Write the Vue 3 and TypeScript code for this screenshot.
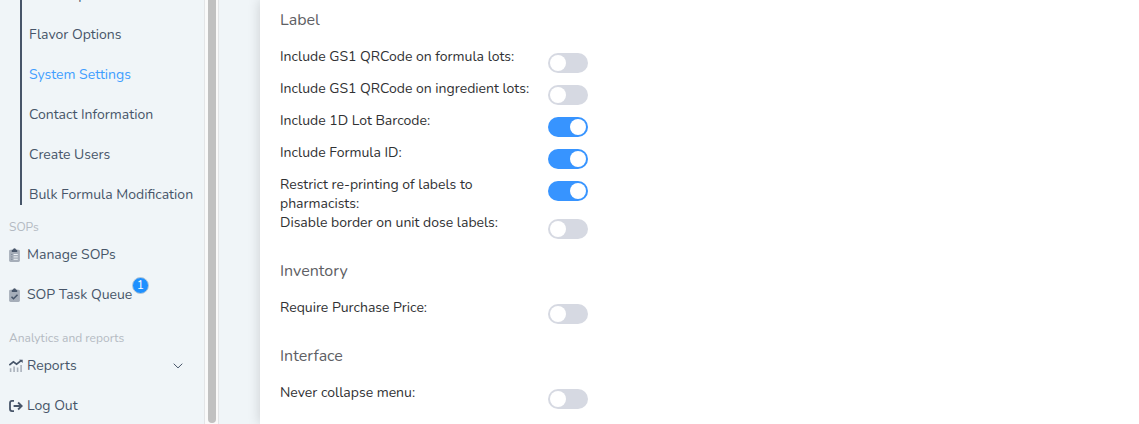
<script setup lang="ts">
interface Setting { lines: string[]; on: boolean }
interface Section { title: string; settings: Setting[] }

const subItems: { text: string; active?: boolean }[] = [
  { text: 'Label Options' },
  { text: 'Flavor Options' },
  { text: 'System Settings', active: true },
  { text: 'Contact Information' },
  { text: 'Create Users' },
  { text: 'Bulk Formula Modification' },
]

const sections: Section[] = [
  {
    title: 'Label',
    settings: [
      { lines: ['Include GS1 QRCode on formula lots:'], on: false },
      { lines: ['Include GS1 QRCode on ingredient lots:'], on: false },
      { lines: ['Include 1D Lot Barcode:'], on: true },
      { lines: ['Include Formula ID:'], on: true },
      { lines: ['Restrict re-printing of labels to', 'pharmacists:'], on: true },
      { lines: ['Disable border on unit dose labels:'], on: false },
    ],
  },
  { title: 'Inventory', settings: [{ lines: ['Require Purchase Price:'], on: false }] },
  { title: 'Interface', settings: [{ lines: ['Never collapse menu:'], on: false }] },
]
</script>

<template>
  <div class="page">
    <nav class="sidebar">
      <ul class="submenu">
        <li v-for="item in subItems" :key="item.text" :class="{ active: item.active }">{{ item.text }}</li>
      </ul>
      <div class="group first">SOPs</div>
      <div class="item">
        <svg class="icon" width="14" height="14" viewBox="0 0 14 14">
          <rect x="0.1" y="1.7" width="10.8" height="12.2" rx="1.4" fill="#a6aeb9" />
          <path d="M2.8 3.9V1.8H4a1.5 1.5 0 0 1 3 0h1.2v2.1z" fill="#475569" />
          <path d="M4.6 6.5h4.2M4.6 8.9h4.2M4.6 11.3h4.2" stroke="#edf2f6" stroke-width="1" />
          <path d="M2.2 6.5h1.2M2.2 8.9h1.2M2.2 11.3h1.2" stroke="#7c8797" stroke-width="1" />
        </svg>
        <span>Manage SOPs</span>
      </div>
      <div class="item">
        <svg class="icon" width="14" height="14" viewBox="0 0 14 14">
          <rect x="0.1" y="1.7" width="10.8" height="12.2" rx="1.4" fill="#a6aeb9" />
          <path d="M2.8 3.9V1.8H4a1.5 1.5 0 0 1 3 0h1.2v2.1z" fill="#475569" />
          <path d="M2.5 8.8l2 2 4-4" fill="none" stroke="#475569" stroke-width="1.5" />
        </svg>
        <span>SOP Task Queue</span>
        <b class="badge">1</b>
      </div>
      <div class="group second">Analytics and reports</div>
      <div class="item">
        <svg class="icon" width="14" height="14" viewBox="0 0 14 14">
          <path d="M1.6 9.2V13M5.1 7.5V13M8.6 8.5V13M12.1 6V13" stroke="#aab2bc" stroke-width="1.6" />
          <path d="M0.3 6.2L4.4 2.8l3.2 2.4 4.8-3.8" fill="none" stroke="#475569" stroke-width="1.7" />
          <path d="M10 0.8h3.7v3.2z" fill="#475569" />
        </svg>
        <span>Reports</span>
        <svg class="chevron" width="10" height="6" viewBox="0 0 10 6">
          <path d="M0.7 0.7L5 4.9l4.3-4.2" fill="none" stroke="#475569" stroke-width="1" />
        </svg>
      </div>
      <div class="item">
        <svg class="icon" width="14" height="14" viewBox="0 0 14 14">
          <path
            d="M5 1.9H3Q1 1.9 1 3.9v6.2q0 2 2 2h2M4.6 7h7.7M9.1 3.5L12.7 7l-3.6 3.5"
            fill="none" stroke="#475569" stroke-width="1.8"
          />
        </svg>
        <span>Log Out</span>
      </div>
    </nav>
    <div class="track"><div class="thumb"></div></div>
    <div class="gutter"></div>
    <main class="content">
      <section v-for="section in sections" :key="section.title">
        <h2>{{ section.title }}</h2>
        <div v-for="setting in section.settings" :key="setting.lines[0]" class="row">
          <div class="caption">
            <div v-for="line in setting.lines" :key="line">{{ line }}</div>
          </div>
          <div class="switch" :class="{ on: setting.on }"><i></i></div>
        </div>
      </section>
    </main>
  </div>
</template>

<style>
body {
  margin: 0;
  overflow: hidden;
}
</style>

<style scoped>
.page {
  display: flex;
  height: 424px;
  overflow: hidden;
  background: #f0f5f8;
  color: #475569;
  font: 14px/19px Nunito, "Open Sans", sans-serif;
  white-space: nowrap;
}
.sidebar {
  width: 204px;
  flex: none;
  margin-top: -26px;
}
.submenu {
  list-style: none;
  margin: 0 0 0 20px;
  padding: 0;
  height: 231px;
  border-left: 2px solid #475569;
}
.submenu li {
  box-sizing: border-box;
  height: 40px;
  padding: 1px 0 0 7px;
  line-height: 40px;
}
.submenu .active {
  color: #409eff;
}
.group {
  box-sizing: border-box;
  padding-left: 9px;
  color: #b4bac2;
  font-size: 12px;
  line-height: 14px;
}
.first {
  height: 29px;
  padding-top: 15px;
}
.second {
  height: 31px;
  padding-top: 17px;
}
.item {
  display: flex;
  align-items: center;
  height: 40px;
  padding-left: 9px;
}
.icon {
  flex: none;
  margin: 2px 4px 0 0;
}
.badge {
  box-sizing: border-box;
  width: 17px;
  height: 17px;
  margin: -18px 0 0 -0.5px;
  border: 1px solid #b8c9d7;
  border-radius: 50%;
  background: #1e90ff;
  color: #fff;
  font-size: 12px;
  font-weight: 400;
  line-height: 15px;
  text-align: center;
}
.chevron {
  margin: 1px 21px 0 auto;
}
.track {
  box-sizing: border-box;
  flex: none;
  width: 15px;
  padding-left: 3px;
  border: solid #e3e5e7;
  border-width: 0 1px;
  background: #fafafa;
}
.thumb {
  width: 8px;
  height: 423px;
  border-radius: 0 0 4px 4px;
  background: #c1c1c1;
}
.gutter {
  width: 41px;
  flex: none;
}
.content {
  flex: 1;
  padding-left: 20px;
  background: #fff;
  box-shadow: 0 0 12px rgba(0, 0, 0, 0.16);
}
section:first-child {
  margin-top: -6px;
}
h2 {
  margin: 0;
  padding: 14px 0 15px;
  color: #5e6064;
  font-size: 16px;
  font-weight: 400;
  line-height: 24px;
}
.row {
  display: flex;
  min-height: 32px;
  color: #303133;
}
.caption {
  width: 268px;
}
.switch {
  box-sizing: border-box;
  display: flex;
  width: 40px;
  height: 20px;
  margin-top: 6px;
  padding: 2px;
  border-radius: 10px;
  background: #d6d9e2;
}
.switch i {
  width: 16px;
  height: 16px;
  border-radius: 50%;
  background: #fff;
}
.switch.on {
  justify-content: flex-end;
  background: #3794ff;
}
</style>
